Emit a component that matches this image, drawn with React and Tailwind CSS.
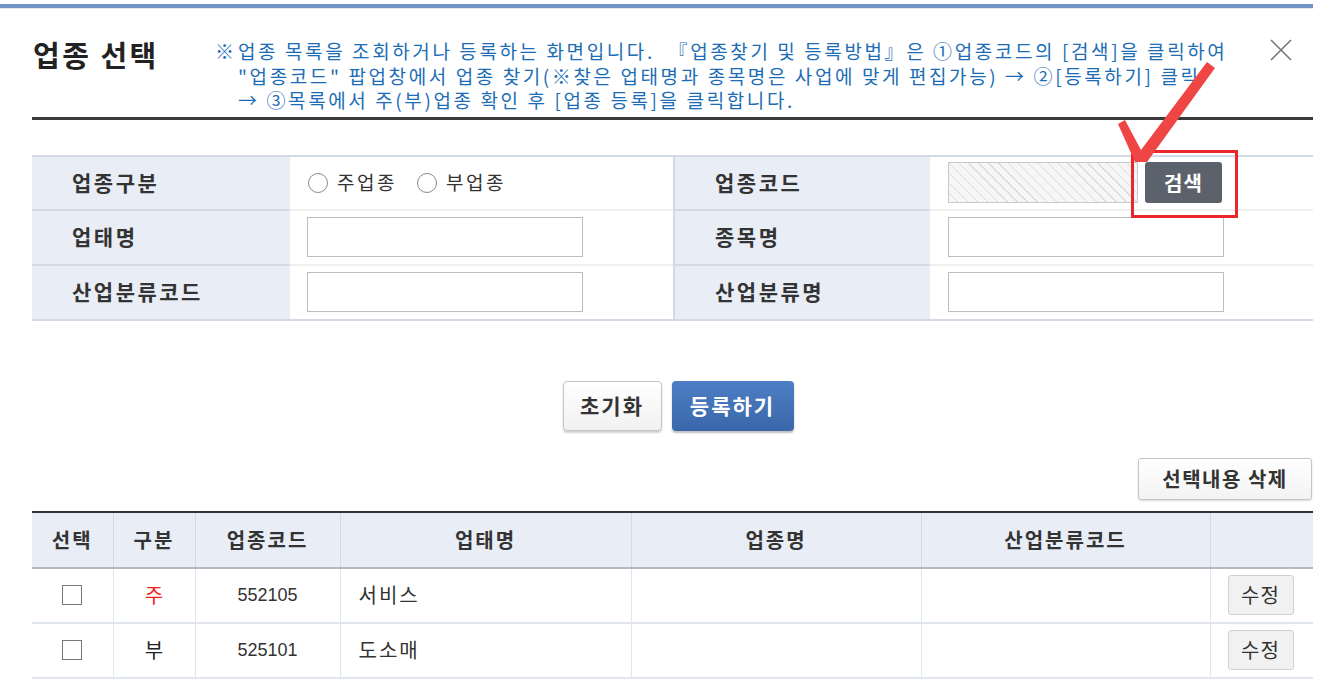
import { useState } from 'react';

const FONT = { fontFamily: '"Noto Sans CJK KR", "Noto Sans", sans-serif' };

const rows = [
  { id: 1, kind: '주', main: true, code: '552105', bizType: '서비스', item: '', ksic: '' },
  { id: 2, kind: '부', main: false, code: '525101', bizType: '도소매', item: '', ksic: '' },
];

function Label({ children, className = '' }) {
  return (
    <div className={`flex items-center bg-[#e9edf5] pl-[40px] text-[21px] font-bold tracking-[2.5px] text-[#333] ${className}`}>
      {children}
    </div>
  );
}

function Radio({ label, checked, onChange }) {
  return (
    <label className="flex items-center gap-[9px] cursor-pointer">
      <span className="flex h-[20px] w-[20px] items-center justify-center rounded-full border border-[#8a8a8a] bg-white">
        {checked && <span className="h-[10px] w-[10px] rounded-full bg-[#333]" />}
      </span>
      <span className="text-[19px] tracking-[2.5px] text-[#333]" onClick={onChange}>{label}</span>
    </label>
  );
}

export default function App() {
  const [kind, setKind] = useState('');
  const [checked, setChecked] = useState({});

  return (
    <div className="relative h-[681px] w-[1321px] overflow-hidden bg-white" style={FONT}>
      {/* top bar */}
      <div className="mt-[4px] h-[4px] w-[1313px] bg-[#7393c4]" />
      <div className="h-px w-[1313px] bg-[#e4e9f0]" />

      {/* header */}
      <div className="mt-[30px] flex items-start pl-[33px] pr-[28px]">
        <h1 className="w-[182px] text-[29px] font-bold leading-[30px] tracking-[2.5px] text-[#222]">업종 선택</h1>
        <div className="flex text-[19px] leading-[24.5px] text-[#1c6db5]">
          <span className="w-[23px] text-[#1c6db5]">※</span>
          <div className="whitespace-nowrap tracking-[2.6px]">
            <div>업종 목록을 조회하거나 등록하는 화면입니다. &nbsp;『업종찾기 및 등록방법』은 ①업종코드의 [검색]을 클릭하여</div>
            <div>"업종코드" 팝업창에서 업종 찾기(※찾은 업태명과 종목명은 사업에 맞게 편집가능) → ②[등록하기] 클릭</div>
            <div>→ ③목록에서 주(부)업종 확인 후 [업종 등록]을 클릭합니다.</div>
          </div>
        </div>
        <button className="ml-auto mt-[-1px] text-[#777]" aria-label="닫기">
          <svg width="24" height="24" viewBox="0 0 24 24" fill="none" stroke="#777" strokeWidth="1.6">
            <path d="M2 2 L22 22 M22 2 L2 22" />
          </svg>
        </button>
      </div>
      <div className="ml-[32px] mt-[4px] h-[3px] w-[1281px] bg-[#3a3a3a]" />

      {/* form */}
      <div className="ml-[32px] mt-[35px] grid w-[1281px] grid-cols-[258px_383px_257px_383px] border-t-2 border-b-2 border-[#d3dae5]">
        <Label className="h-[54px] border-b-2 border-[#d3dae5]">업종구분</Label>
        <div className="flex h-[54px] items-center gap-[20px] border-b-2 border-[#efefef] pl-[18px]">
          <Radio label="주업종" checked={kind === 'main'} onChange={() => setKind('main')} />
          <Radio label="부업종" checked={kind === 'sub'} onChange={() => setKind('sub')} />
        </div>
        <Label className="h-[54px] border-b-2 border-l-2 border-[#d3dae5]">업종코드</Label>
        <div className="flex h-[54px] items-center border-b-2 border-[#efefef] pl-[18px]">
          <div className="h-[41px] w-[190px] border border-[#c9c9c9] bg-[image:repeating-linear-gradient(45deg,#f6f6f6_0px,#f6f6f6_6px,#dcdcdc_6px,#dcdcdc_7px)]" />
          <button className="ml-[7px] h-[41px] w-[77px] rounded-[3px] bg-[#5c626c] text-[20px] font-bold tracking-[1px] text-white">검색</button>
        </div>

        <Label className="h-[55px] border-b-2 border-[#d3dae5]">업태명</Label>
        <div className="flex h-[55px] items-center border-b-2 border-[#efefef] pl-[17px]">
          <input className="h-[40px] w-[276px] border border-[#bdbdbd] px-2 text-[18px] outline-none" />
        </div>
        <Label className="h-[55px] border-b-2 border-l-2 border-[#d3dae5]">종목명</Label>
        <div className="flex h-[55px] items-center border-b-2 border-[#efefef] pl-[18px]">
          <input className="h-[40px] w-[276px] border border-[#bdbdbd] px-2 text-[18px] outline-none" />
        </div>

        <Label className="h-[53px]">산업분류코드</Label>
        <div className="flex h-[53px] items-center pl-[17px]">
          <input className="h-[40px] w-[276px] border border-[#bdbdbd] px-2 text-[18px] outline-none" />
        </div>
        <Label className="h-[53px] border-l-2 border-[#d3dae5]">산업분류명</Label>
        <div className="flex h-[53px] items-center pl-[18px]">
          <input className="h-[40px] w-[276px] border border-[#bdbdbd] px-2 text-[18px] outline-none" />
        </div>
      </div>

      {/* action buttons */}
      <div className="mt-[60px] flex justify-center gap-[10px] pl-[35px]">
        <button className="h-[50px] w-[99px] rounded-[4px] border border-[#c4c4c4] bg-gradient-to-b from-white to-[#f1f1f1] text-[21px] font-bold tracking-[2px] text-[#333] shadow-[0_2px_2px_rgba(0,0,0,0.18)]">초기화</button>
        <button className="h-[50px] w-[122px] rounded-[4px] bg-gradient-to-b from-[#4d7ec3] to-[#3a67aa] text-[21px] font-bold tracking-[2px] text-white shadow-[0_2px_2px_rgba(0,0,0,0.25)]">등록하기</button>
      </div>

      <div className="mt-[27px] flex justify-end pr-[9px]">
        <button className="h-[42px] w-[174px] rounded-[3px] border border-[#c4c4c4] bg-gradient-to-b from-white to-[#f3f3f3] text-[20px] font-bold tracking-[1.5px] text-[#333] shadow-[0_1px_2px_rgba(0,0,0,0.15)]">선택내용 삭제</button>
      </div>

      {/* list table */}
      <table className="ml-[32px] mt-[11px] w-[1281px] table-fixed border-collapse text-[#333]">
        <colgroup>
          <col className="w-[81px]" />
          <col className="w-[82px]" />
          <col className="w-[145px]" />
          <col className="w-[291px]" />
          <col className="w-[290px]" />
          <col className="w-[289px]" />
          <col className="w-[103px]" />
        </colgroup>
        <thead>
          <tr className="h-[56px] border-t-2 border-b-2 border-t-[#333] border-b-[#b4b9c1] bg-[#e9edf5] text-[20px] font-semibold">
            {['선택', '구분', '업종코드', '업태명', '업종명', '산업분류코드', ''].map((h, i) => (
              <th key={i} className={`font-semibold tracking-[2px] ${i > 0 ? 'border-l border-[#d2dae6]' : ''}`}>{h}</th>
            ))}
          </tr>
        </thead>
        <tbody>
          {rows.map((r) => (
            <tr key={r.id} className="h-[55px] border-b-2 border-[#e1e6ee] text-[18px]">
              <td className="text-center">
                <button
                  className="mx-auto flex h-[20px] w-[20px] items-center justify-center border border-[#777] bg-white"
                  onClick={() => setChecked({ ...checked, [r.id]: !checked[r.id] })}
                >
                  {checked[r.id] && <span className="text-[14px] leading-none">✓</span>}
                </button>
              </td>
              <td className={`border-l border-[#e1e6ee] text-center text-[20px] ${r.main ? 'text-[#f0201c]' : 'text-[#222]'}`}>{r.kind}</td>
              <td className="border-l border-[#e1e6ee] text-center" style={{ fontFamily: '"Liberation Sans", sans-serif' }}>{r.code}</td>
              <td className="border-l border-[#e1e6ee] pl-[18px] text-[20px] tracking-[2px]">{r.bizType}</td>
              <td className="border-l border-[#e1e6ee]">{r.item}</td>
              <td className="border-l border-[#e1e6ee]">{r.ksic}</td>
              <td className="border-l border-[#e1e6ee] pl-[17px]">
                <button className="h-[40px] w-[66px] rounded-[3px] border border-[#d0d0d0] bg-[#f1f1f1] text-[20px] tracking-[1px] text-[#333]">수정</button>
              </td>
            </tr>
          ))}
        </tbody>
      </table>

      {/* red annotation: box and check mark over the search button */}
      <div className="pointer-events-none absolute left-[1131px] top-[150px] h-[68px] w-[107px] border-[3px] border-[#e8262b]" />
      <svg className="pointer-events-none absolute left-0 top-0" width="1321" height="681" viewBox="0 0 1321 681">
        <path d="M1118 124 L1125 120 L1141 150 L1207 62 L1215 68 L1147 162 L1135 162 Z" fill="#f04545" />
      </svg>
    </div>
  );
}
